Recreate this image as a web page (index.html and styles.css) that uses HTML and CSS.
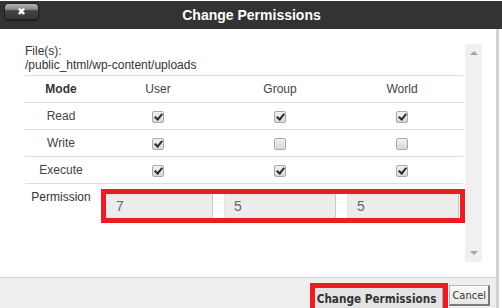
FILE: index.html
```html
<!DOCTYPE html>
<html lang="en">
<head>
<meta charset="UTF-8" />
<title>Change Permissions</title>
<link rel="stylesheet" href="styles.css">
</head>
<body>

<div class="dialog">
  <div class="titlebar">
    <button class="close" type="button">&#10006;</button>
    <h1>Change Permissions</h1>
  </div>

  <div class="main">
    <div class="content">
      <div class="scroller">
        <div class="inner">
          <div class="files">File(s):<br>/public_html/wp-content/uploads</div>

          <div class="perms">
            <div class="row head">
              <div class="mode">Mode</div>
              <div>User</div>
              <div>Group</div>
              <div>World</div>
            </div>
            <div class="row">
              <div>Read</div>
              <div><span class="cb on"></span></div>
              <div><span class="cb on"></span></div>
              <div><span class="cb on"></span></div>
            </div>
            <div class="row">
              <div>Write</div>
              <div><span class="cb on"></span></div>
              <div><span class="cb"></span></div>
              <div><span class="cb"></span></div>
            </div>
            <div class="row">
              <div>Execute</div>
              <div><span class="cb on"></span></div>
              <div><span class="cb on"></span></div>
              <div><span class="cb on"></span></div>
            </div>
            <div class="row perm-row">
              <div class="perm-label">Permission</div>
              <div class="highlight inputs">
                <input class="num first" type="text" value="7" />
                <input class="num" type="text" value="5" />
                <input class="num" type="text" value="5" />
              </div>
            </div>
          </div>
        </div>

        <div class="scrollbar">
          <span class="arrow up"></span>
          <span class="arrow down"></span>
        </div>
      </div>
    </div>

    <div class="footer">
      <div class="highlight btn-wrap">
        <button class="btn primary" type="button">Change Permissions</button>
      </div>
      <button class="btn cancel" type="button">Cancel</button>
    </div>
  </div>
</div>

</body>
</html>
```

FILE: styles.css
```css
/* Base */
body {
  margin: 0;
  width: 502px;
  height: 308px;
  overflow: hidden;
  background: #fff;
  font-family: Arial, "Liberation Sans", sans-serif;
  font-size: 12px;
  color: #333;
}

.dialog {
  display: flex;
  flex-direction: column;
  height: 308px;
}

/* Title bar */
.titlebar {
  flex-shrink: 0;
  margin-top: 1px;
  height: 28px;
  background: #333;
  display: flex;
  align-items: center;
  justify-content: center;
  position: relative;
}

.titlebar h1 {
  margin: 0;
  font-size: 14px;
  font-weight: 700;
  color: #fff;
  padding-left: 1px;
}

.close {
  position: absolute;
  left: 4px;
  top: 2px;
  width: 35px;
  height: 17px;
  padding: 0;
  border: 1px solid #222;
  border-radius: 4px;
  background: linear-gradient(#b4b4b4 0%, #8a8a8a 35%, #444 45%, #363636 100%);
  color: #fff;
  font-family: "DejaVu Sans", sans-serif;
  font-size: 10px;
  font-weight: 700;
  line-height: 15px;
  box-shadow: 0 1px 1px rgba(0,0,0,0.5);
}

/* Body */
.main {
  flex: 1;
  display: flex;
  flex-direction: column;
  margin-right: 3px;
  border-right: 3px solid #d2d2d2;
  min-height: 0;
}

.content {
  flex-shrink: 0;
  padding: 15px 14px 15px 20px;
}

.scroller {
  display: flex;
  height: 218px;
  overflow: hidden;
}

.inner {
  flex: 1;
  padding-left: 5px;
  padding-right: 2px;
}

.files {
  line-height: 14px;
  color: #333;
}

.perms {
  margin-top: 3px;
  border-top: 1px solid #ddd;
}

.row {
  display: grid;
  grid-template-columns: 72px 122px 122px 122px;
  height: 26px;
  align-items: center;
  text-align: center;
  border-bottom: 1px solid #ddd;
  color: #444;
}

.row .mode {
  font-weight: 700;
  color: #333;
}

/* Checkboxes */
.cb {
  display: inline-block;
  width: 10px;
  height: 10px;
  border: 1px solid #a9a9a9;
  border-radius: 2px;
  background: linear-gradient(#f2f2f2, #d8d8d8);
  vertical-align: middle;
  position: relative;
}

.cb.on::after {
  content: "";
  position: absolute;
  left: 3px;
  top: 0px;
  width: 3px;
  height: 6px;
  border: solid #2b2b2b;
  border-width: 0 2px 2px 0;
  transform: rotate(40deg);
}

/* Permission row */
.perm-row {
  height: auto;
  align-items: start;
  border-bottom: none;
}

.perm-label {
  padding-top: 6px;
  line-height: 14px;
  color: #333;
}

.highlight {
  border: 5px solid #ec1c24;
}

.inputs {
  grid-column: 2 / 5;
  margin: 5px -2px 0 4px;
  display: flex;
  gap: 11px;
  background: #fff;
}

.num {
  width: 112px;
  height: 24px;
  box-sizing: border-box;
  border: 1px solid #e4e4e4;
  border-right-color: #c8c8c8;
  background: #ececec;
  padding: 0 0 0 9px;
  font-family: Arial, "Liberation Sans", sans-serif;
  font-size: 14px;
  color: #666;
  outline: none;
}

.num.first {
  width: 107px;
}

/* Fake scrollbar */
.scrollbar {
  width: 17px;
  background: #f0f0f0;
  position: relative;
}

.arrow {
  position: absolute;
  left: 5px;
  width: 0;
  height: 0;
  border-left: 4px solid transparent;
  border-right: 4px solid transparent;
}

.arrow.up {
  top: 7px;
  border-bottom: 4px solid #a3a3a3;
}

.arrow.down {
  bottom: 7px;
  border-top: 4px solid #a3a3a3;
}

/* Footer */
.footer {
  flex-shrink: 0;
  height: 25px;
  border-top: 1px solid #cfcfcf;
  background: #eee;
  display: flex;
  justify-content: flex-end;
  align-items: flex-start;
  gap: 1px;
  padding: 5px 6px 0 0;
  overflow: hidden;
}

.btn-wrap {
  display: flex;
}

.btn {
  font-family: "DejaVu Sans Condensed", "DejaVu Sans", sans-serif;
  font-size: 11px;
  color: #333;
  margin: 0;
  cursor: pointer;
}

.primary {
  height: 22px;
  padding: 0 6px 0 2px;
  border: none;
  border-right: 1px solid #aaa;
  background: #e4e4e4;
  font-size: 11.7px;
  font-weight: 700;
}

.cancel {
  margin-top: 2px;
  height: 21px;
  padding: 0 2px;
  border: 1px solid #b5b5b5;
  border-right: 2px solid #7a7a7a;
  border-bottom: 2px solid #7a7a7a;
  background: linear-gradient(#fafafa, #e6e6e6);
}
```
